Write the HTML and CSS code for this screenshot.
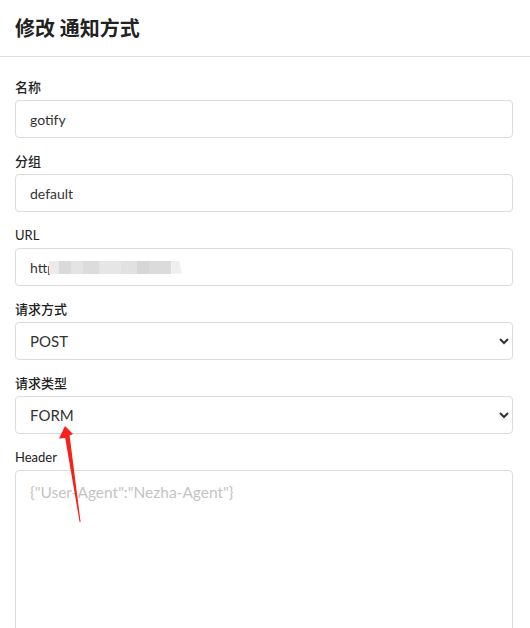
FILE: index.html
```html
<!DOCTYPE html>
<html lang="zh">
<head>
<meta charset="utf-8">
<title>修改 通知方式</title>
<link rel="stylesheet" href="styles.css">
</head>
<body>
<div class="modal">
  <div class="header">修改 通知方式</div>
  <form class="content">
    <div class="field">
      <label>名称</label>
      <input type="text" value="gotify">
    </div>
    <div class="field">
      <label>分组</label>
      <input type="text" value="default">
    </div>
    <div class="field">
      <label class="latin">URL</label>
      <div class="fake-input">
        <span class="url-text">http</span>
        <span class="blur">
          <i class="b1"></i><i class="b2"></i><i class="b3"></i><i class="b4"></i><i class="b5"></i><i class="b6"></i><i class="b7"></i><i class="b8"></i><i class="b9"></i>
        </span>
      </div>
    </div>
    <div class="field">
      <label>请求方式</label>
      <select><option>POST</option><option>GET</option></select>
    </div>
    <div class="field">
      <label>请求类型</label>
      <select><option>FORM</option><option>JSON</option></select>
    </div>
    <div class="field">
      <label class="latin">Header</label>
      <textarea placeholder='{"User-Agent":"Nezha-Agent"}'></textarea>
    </div>
  </form>
  <svg class="arrow" width="40" height="110" viewBox="0 0 40 110">
    <path d="M15 0 L23 8 L19.6 9.5 L30.6 96 L29.6 96 L15.2 12 L9 12.5 Z" fill="#f5221b"/>
  </svg>
</div>
</body>
</html>
```
FILE: styles.css
```css
html, body {
  margin: 0;
  padding: 0;
  background: #fff;
}
body {
  font-family: Lato, "Noto Sans CJK SC", sans-serif;
  color: rgba(0, 0, 0, 0.87);
  overflow: hidden;
}
.modal {
  position: relative;
  width: 530px;
}
.header {
  padding: 15px 15px;
  font-size: 20px;
  line-height: 26px;
  font-weight: 700;
  color: #222;
  border-bottom: 1px solid #dedede;
}
.content {
  padding: 21px 17px 0 15px;
  margin: 0;
}
.field {
  display: flex;
  flex-direction: column;
  margin-bottom: 14px;
}
.field label {
  font-size: 13px;
  line-height: 18px;
  font-weight: 500;
  color: #222;
  margin-bottom: 4px;
}
.field label.latin {
  font-weight: 400;
  color: #222;
}
input, .fake-input, select, textarea {
  box-sizing: border-box;
  width: 100%;
  height: 38px;
  border: 1px solid #dcdcdc;
  border-radius: 4px;
  background: #fff;
  font-family: Lato, "Noto Sans CJK SC", sans-serif;
  outline: none;
  margin: 0;
}
input, .fake-input {
  padding: 0 14px;
  font-size: 14px;
  color: #333;
}
.fake-input {
  display: flex;
  align-items: center;
}
.url-text {
  color: #333;
}
.blur {
  display: flex;
  height: 13px;
  margin-left: -6px;
}
.blur i {
  display: block;
  height: 13px;
}
.b1 { width: 10px; background: #ebebeb; }
.b2 { width: 12px; background: #dadada; }
.b3 { width: 12px; background: #e4e4e4; }
.b4 { width: 16px; background: #dcdcdc; }
.b5 { width: 22px; background: #e6e6e6; }
.b6 { width: 16px; background: #e1e1e1; }
.b7 { width: 12px; background: #d6d6d6; }
.b8 { width: 22px; background: #dbdbdb; }
.b9 { width: 11px; background: #efefef; clip-path: polygon(0 0, 70% 0, 100% 100%, 0 100%); }
select {
  padding: 0 8px 0 10px;
  font-size: 15px;
  color: #333;
}
textarea {
  height: 180px;
  padding: 11px 14px;
  font-size: 15.5px;
  line-height: 20px;
  resize: none;
  color: #333;
}
textarea::placeholder {
  color: #c4c4c4;
}
.arrow {
  position: absolute;
  left: 50px;
  top: 426px;
}
```
